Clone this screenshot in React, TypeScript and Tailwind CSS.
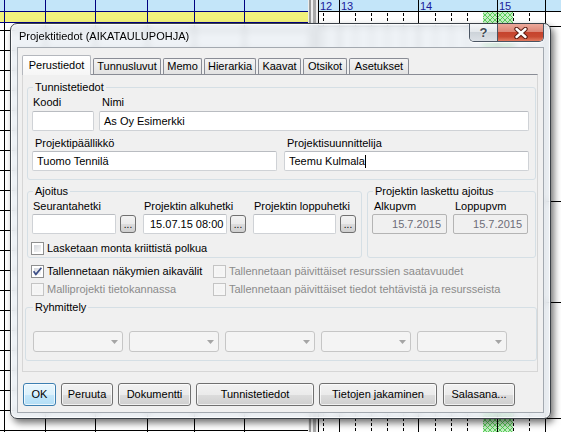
import type { ReactNode } from "react"

const NAVY = "#000080"

function GanttBackdrop() {
  const leftCols = [4, 45, 95, 147, 194, 244]
  const rows = Array.from({ length: 21 }, (_, i) => 30 + i * 20)
  const dashed = [323, 355, 371, 387, 403, 435, 451, 467, 513, 529]
  const solid = [318, 339, 418, 497, 545]
  const hRight = [26, 201, 302, 418]
  return (
    <svg width="561" height="432" className="block">
      <defs>
        <pattern id="hatch" width="5" height="5" patternUnits="userSpaceOnUse">
          <rect width="5" height="5" fill="#c4f0c4" />
          <path d="M0 0L5 5M5 0L0 5" stroke="#40c440" strokeWidth="0.8" />
        </pattern>
      </defs>
      <rect width="561" height="432" fill="#ffffff" />
      <rect x="0" y="0" width="308" height="11" fill="#c3e5f9" />
      <rect x="0" y="11" width="308" height="11" fill="#f2f27c" />
      <rect x="318" y="0" width="243" height="11" fill="#c3e5f9" />
      <rect x="483" y="12" width="30" height="420" fill="url(#hatch)" />
      {rows.map((y) => (
        <line key={y} x1="0" x2="308" y1={y + 0.5} y2={y + 0.5} stroke="#000" />
      ))}
      {leftCols.map((x) => (
        <line key={"n" + x} x1={x + 0.5} x2={x + 0.5} y1="0" y2="22" stroke={NAVY} />
      ))}
      {leftCols.map((x) => (
        <line key={"b" + x} x1={x + 0.5} x2={x + 0.5} y1="22" y2="432" stroke="#000" />
      ))}
      <line x1="0" x2="308" y1="11.5" y2="11.5" stroke={NAVY} />
      <line x1="0" x2="308" y1="22.5" y2="22.5" stroke={NAVY} />
      {/* splitter */}
      <rect x="308" y="0" width="10" height="432" fill="#eeeeee" />
      <rect x="309" y="0" width="2" height="432" fill="#9a9a9a" />
      <rect x="313" y="0" width="3" height="432" fill="#a8a8a8" />
      <line x1="318" x2="561" y1="11.5" y2="11.5" stroke="#000" />
      {hRight.map((y) => (
        <line key={"h" + y} x1="318" x2="561" y1={y + 0.5} y2={y + 0.5} stroke="#000" />
      ))}
      {dashed.map((x) => (
        <line key={"d" + x} x1={x + 0.5} x2={x + 0.5} y1="13" y2="432" stroke="#000" strokeDasharray="3 2" />
      ))}
      {solid.map((x) => (
        <line key={"s" + x} x1={x + 0.5} x2={x + 0.5} y1="0" y2="432" stroke="#000" />
      ))}
      <g fontFamily="Liberation Sans, Arial, sans-serif" fontSize="11" fill="#1a1a9a">
        <text x="320" y="10">12</text>
        <text x="341" y="10">13</text>
        <text x="420" y="10">14</text>
        <text x="499" y="10">15</text>
      </g>
    </svg>
  )
}

function CaptionButtons() {
  return (
    <div className="flex h-[18px] rounded-b-[5px] border border-t-0 border-[#4a5563] overflow-hidden shadow-[0_1px_1px_rgba(255,255,255,0.9)]">
      <div className="w-[27px] flex items-center justify-center bg-[linear-gradient(#f5f7f9_0%,#e3e7eb_45%,#cdd3d9_50%,#dce1e6_100%)]">
        <span className="font-bold text-[13px] leading-[13px] text-[#414a55] [text-shadow:0_0_2px_#ffffff]">?</span>
      </div>
      <div className="w-px bg-[#4a5563]" />
      <div className="w-[45px] flex items-center justify-center bg-[linear-gradient(#eba99b_0%,#dc8676_45%,#c6432d_50%,#c84a32_75%,#e27b60_100%)]">
        <svg width="16" height="12" viewBox="0 0 16 12">
          <path d="M3.5 2L12.5 10M12.5 2L3.5 10" stroke="#5a1c12" strokeWidth="4.4" strokeLinecap="round" />
          <path d="M3.5 2L12.5 10M12.5 2L3.5 10" stroke="#ffffff" strokeWidth="2.4" strokeLinecap="round" />
        </svg>
      </div>
    </div>
  )
}

function TextBox({
  value,
  className = "",
  disabled = false,
  caret = false,
}: {
  value?: string
  className?: string
  disabled?: boolean
  caret?: boolean
}) {
  return (
    <div
      className={`h-[20px] flex items-center border rounded-[2px] whitespace-nowrap ${
        disabled
          ? "bg-[#f0f0f0] border-[#b4b4b4] justify-end pr-[5px] text-[#6d6d78]"
          : "bg-white border-[#cfd2d6] border-t-[#b9bcc1] px-[4px]"
      } ${className}`}
    >
      {value}
      {caret && <span className="w-px h-[13px] bg-black" />}
    </div>
  )
}

function DotsButton({ className = "" }: { className?: string }) {
  return (
    <div
      className={`w-[16px] h-[18px] border border-[#707070] rounded-[3px] bg-[linear-gradient(#f2f2f2_0%,#ebebeb_50%,#dddddd_50%,#cfcfcf_100%)] flex items-end justify-center leading-[11px] pb-[2px] text-[10px] ${className}`}
    >
      ...
    </div>
  )
}

function CheckBox({ label, checked = false, disabled = false }: { label: string; checked?: boolean; disabled?: boolean }) {
  return (
    <div className="flex items-center h-[13px] whitespace-nowrap">
      <div
        className={`relative w-[13px] h-[13px] shrink-0 border p-[2px] ${
          disabled ? "border-[#c4c4c4] bg-[#f6f6f6]" : "border-[#8e8f8f] bg-white"
        }`}
      >
        <div
          className={`w-full h-full ${
            disabled ? "bg-[#f4f4f4]" : "bg-[linear-gradient(135deg,#d4d7dc,#f8f8f8)]"
          }`}
        />
        {checked && (
          <svg className="absolute left-0 top-0" width="11" height="11" viewBox="0 0 11 11">
            <path d="M1.6 5.2L3.9 8.4L9.4 1.8" stroke="#3b4d86" strokeWidth="1.7" fill="none" />
          </svg>
        )}
      </div>
      <span className={`ml-[3px] leading-[13px] ${disabled ? "text-[#8b8b8b]" : ""}`}>{label}</span>
    </div>
  )
}

function Combo() {
  return (
    <div className="w-[90px] h-[21px] border border-[#c6c6c6] rounded-[3px] bg-[#f4f4f4] flex items-center justify-end pr-[4px]">
      <svg width="7" height="4" viewBox="0 0 7 4">
        <path d="M0 0H7L3.5 4Z" fill="#a5a5a5" />
      </svg>
    </div>
  )
}

function Btn({ children, className = "", focused = false }: { children: ReactNode; className?: string; focused?: boolean }) {
  return (
    <button
      type="button"
      className={`h-[23px] flex items-center justify-center rounded-[3px] border whitespace-nowrap ${
        focused
          ? "border-[#3c7fb1] bg-[linear-gradient(#e9f6fd_0%,#dcf1fc_50%,#c5e7fb_50%,#b3def6_100%)] shadow-[inset_0_0_0_1px_rgba(255,255,255,0.7)]"
          : "border-[#707070] bg-[linear-gradient(#f2f2f2_0%,#ebebeb_50%,#dddddd_50%,#cfcfcf_100%)] shadow-[inset_0_0_0_1px_rgba(255,255,255,0.7)]"
      } ${className}`}
    >
      {children}
    </button>
  )
}

const Label = ({ children, className = "" }: { children: ReactNode; className?: string }) => (
  <span className={`block leading-[13px] whitespace-nowrap ${className}`}>{children}</span>
)

const tabs = [
  { label: "Perustiedot", w: "w-[69px]" },
  { label: "Tunnusluvut", w: "w-[68px]" },
  { label: "Memo", w: "w-[39px]" },
  { label: "Hierarkia", w: "w-[52px]" },
  { label: "Kaavat", w: "w-[43px]" },
  { label: "Otsikot", w: "w-[44px]" },
  { label: "Asetukset", w: "w-[60px]" },
]

function Dialog() {
  return (
    <div className="absolute left-[10px] top-[23px] w-[541px] h-[396px] rounded-[7px] border border-[#3b4148] bg-[rgba(234,239,244,0.8)] backdrop-blur-[3px] shadow-[3px_4px_7px_rgba(0,0,0,0.55),inset_0_0_0_1px_rgba(255,255,255,0.75)] flex flex-col px-[6px] pb-[5px]">
      <div className="h-[23px] flex items-start justify-between">
        <div className="pt-[6px] pl-[2px] text-[11px] leading-[13px]">Projektitiedot (AIKATAULUPOHJA)</div>
        <CaptionButtons />
      </div>

      <div className="h-[366px] border border-[#a3a9b0] bg-[#f0f0f0] flex flex-col">
        {/* tabs */}
        <div className="relative z-10 ml-[4px] mt-[7px] h-[19px] flex items-end gap-[2px]">
          {tabs.map((t, i) =>
            i === 0 ? (
              <div
                key={t.label}
                className={`${t.w} h-[20px] -mb-px border border-b-0 border-[#b4b7bd] rounded-t-[2px] bg-[linear-gradient(#ffffff,#f6f6f6)] flex justify-center pt-[3px] leading-[13px]`}
              >
                {t.label}
              </div>
            ) : (
              <div
                key={t.label}
                className={`${t.w} h-[16px] border border-b-0 border-[#898c95] rounded-t-[2px] bg-[linear-gradient(#f4f4f4,#e2e2e2)] flex justify-center pt-[1px] leading-[13px]`}
              >
                {t.label}
              </div>
            )
          )}
        </div>

        {/* tab page */}
        <div className="ml-[4px] w-[516px] h-[298px] border border-[#d6d6d6] border-t-[#898c95] flex flex-col">
          <fieldset className="mt-[6px] ml-[4px] w-[509px] border border-[#d5dfe5] rounded-[3px] pl-[4px] pr-[6px] pb-[8px]">
            <legend className="ml-[1px] px-[2px] leading-[13px]">Tunnistetiedot</legend>
            <div className="mt-[2px] flex">
              <div className="w-[62px]">
                <Label className="pl-[1px]">Koodi</Label>
                <TextBox className="mt-[2px]" />
              </div>
              <div className="ml-[5px] flex-1">
                <Label className="pl-[3px]">Nimi</Label>
                <TextBox className="mt-[2px]" value="As Oy Esimerkki" />
              </div>
            </div>
            <div className="mt-[6px] flex gap-[7px]">
              <div className="flex-1">
                <Label className="pl-[3px]">Projektipäällikkö</Label>
                <TextBox className="mt-px" value="Tuomo Tennilä" />
              </div>
              <div className="flex-1">
                <Label className="pl-[3px]">Projektisuunnittelija</Label>
                <TextBox className="mt-px" value="Teemu Kulmala" caret />
              </div>
            </div>
          </fieldset>

          <div className="mt-[5px] ml-[4px] w-[509px] flex">
            <fieldset className="w-[335px] border border-[#d5dfe5] rounded-[3px] pl-[4px] pr-[5px] pb-[2px]">
              <legend className="ml-[1px] px-[2px] leading-[13px]">Ajoitus</legend>
              <div className="mt-[2px] flex">
                <div className="w-[111px]">
                  <Label className="pl-px">Seurantahetki</Label>
                  <div className="mt-px flex items-center">
                    <TextBox className="w-[84px]" />
                    <DotsButton className="ml-[4px]" />
                  </div>
                </div>
                <div className="w-[110px]">
                  <Label className="pl-px">Projektin alkuhetki</Label>
                  <div className="mt-px flex items-center">
                    <TextBox className="w-[84px] !pl-[6px]" value="15.07.15 08:00" />
                    <DotsButton className="ml-[3px]" />
                  </div>
                </div>
                <div className="w-[103px]">
                  <Label className="pl-px">Projektin loppuhetki</Label>
                  <div className="mt-px flex items-center">
                    <TextBox className="w-[83px]" />
                    <DotsButton className="ml-[4px]" />
                  </div>
                </div>
              </div>
              <div className="mt-[8px] -ml-px">
                <CheckBox label="Lasketaan monta kriittistä polkua" />
              </div>
            </fieldset>

            <fieldset className="ml-[5px] flex-1 border border-[#d5dfe5] rounded-[3px] pl-[4px] pr-[6px]">
              <legend className="ml-[1px] px-[2px] leading-[13px]">Projektin laskettu ajoitus</legend>
              <div className="mt-[2px] flex gap-[6px]">
                <div className="w-[75px]">
                  <Label className="pl-[2px]">Alkupvm</Label>
                  <TextBox className="mt-px" value="15.7.2015" disabled />
                </div>
                <div className="w-[75px]">
                  <Label className="pl-[2px]">Loppupvm</Label>
                  <TextBox className="mt-px" value="15.7.2015" disabled />
                </div>
              </div>
            </fieldset>
          </div>

          <div className="mt-[7px] ml-[8px] grid grid-cols-[182px_1fr] gap-y-[5px]">
            <CheckBox label="Tallennetaan näkymien aikavälit" checked />
            <CheckBox label="Tallennetaan päivittäiset resurssien saatavuudet" disabled />
            <CheckBox label="Malliprojekti tietokannassa" disabled />
            <CheckBox label="Tallennetaan päivittäiset tiedot tehtävistä ja resursseista" disabled />
          </div>

          <fieldset className="mt-[5px] ml-[2px] w-[512px] border border-[#d5dfe5] rounded-[3px] pl-[7px] pb-[8px]">
            <legend className="px-[2px] leading-[13px]">Ryhmittely</legend>
            <div className="mt-[17px] flex gap-[6px]">
              <Combo />
              <Combo />
              <Combo />
              <Combo />
              <Combo />
            </div>
          </fieldset>
        </div>

        {/* buttons */}
        <div className="mt-[11px] ml-[5px] flex">
          <Btn focused className="w-[33px]">OK</Btn>
          <Btn className="ml-[5px] w-[52px]">Peruuta</Btn>
          <Btn className="ml-[5px] w-[73px]">Dokumentti</Btn>
          <Btn className="ml-[5px] w-[118px]">Tunnistetiedot</Btn>
          <Btn className="ml-[5px] w-[118px]">Tietojen jakaminen</Btn>
          <Btn className="ml-[6px] w-[72px]">Salasana...</Btn>
        </div>
      </div>
    </div>
  )
}

export default function App() {
  return (
    <div className="relative w-[561px] h-[432px] overflow-hidden font-['Liberation_Sans',Arial,sans-serif] text-[11px] text-black">
      <GanttBackdrop />
      <Dialog />
    </div>
  )
}
